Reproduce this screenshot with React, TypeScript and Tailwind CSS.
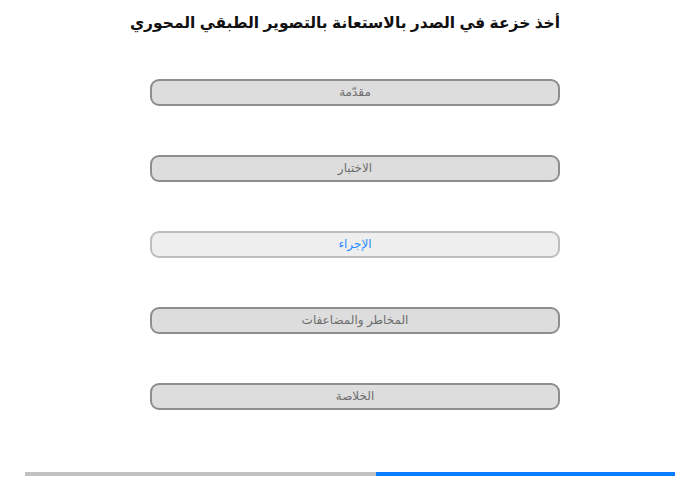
import React from 'react';

const sections = [
  { label: 'مقدّمة', active: false },
  { label: 'الاختبار', active: false },
  { label: 'الإجراء', active: true },
  { label: 'المخاطر والمضاعفات', active: false },
  { label: 'الخلاصة', active: false },
];

const App = () => {
  return (
    <div
      dir="rtl"
      className="w-[700px] h-[480px] bg-white flex flex-col"
      style={{ fontFamily: '"Liberation Sans", Arial, "DejaVu Sans", sans-serif' }}
    >
      {/* Title */}
      <h1 className="mt-[11px] h-[24px] text-center text-[15.5px] leading-[24px] font-bold text-[#111] pr-[10px]">
        أخذ خزعة في الصدر بالاستعانة بالتصوير الطبقي المحوري
      </h1>

      {/* Section buttons */}
      <div className="mt-[44px] flex flex-col gap-[49px] items-center pl-[10px]">
        {sections.map((s) => (
          <button
            key={s.label}
            className={
              s.active
                ? 'w-[410px] h-[27px] rounded-[9px] border-2 border-[#bdbdbd] bg-[#eeeeee] text-[#2d8cff] text-[12px] leading-[23px]'
                : 'w-[410px] h-[27px] rounded-[9px] border-2 border-[#8e8e8e] bg-[#dddddd] text-[#6e6e6e] text-[12px] leading-[23px]'
            }
          >
            {s.label}
          </button>
        ))}
      </div>

      {/* Progress bar */}
      <div dir="ltr" className="mt-auto mb-[4px] mx-[25px] h-[4px] flex">
        <div className="w-[351px] bg-[#c2c2c2]" />
        <div className="flex-1 bg-[#0a7cff]" />
      </div>
    </div>
  );
};

export default App;
